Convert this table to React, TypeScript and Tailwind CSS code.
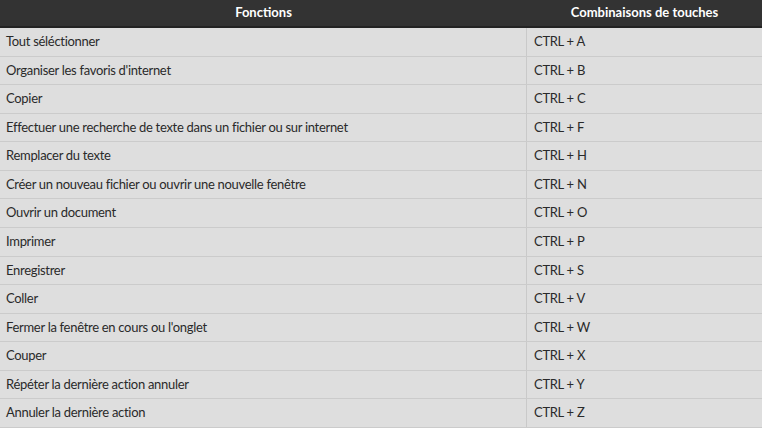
import React from 'react';

const shortcuts: [string, string][] = [
  ['Tout séléctionner', 'CTRL + A'],
  ["Organiser les favoris d'internet", 'CTRL + B'],
  ['Copier', 'CTRL + C'],
  ['Effectuer une recherche de texte dans un fichier ou sur internet', 'CTRL + F'],
  ['Remplacer du texte', 'CTRL + H'],
  ['Créer un nouveau fichier ou ouvrir une nouvelle fenêtre', 'CTRL + N'],
  ['Ouvrir un document', 'CTRL + O'],
  ['Imprimer', 'CTRL + P'],
  ['Enregistrer', 'CTRL + S'],
  ['Coller', 'CTRL + V'],
  ["Fermer la fenêtre en cours ou l'onglet", 'CTRL + W'],
  ['Couper', 'CTRL + X'],
  ['Répéter la dernière action annuler', 'CTRL + Y'],
  ['Annuler la dernière action', 'CTRL + Z'],
];

export default function App() {
  return (
    <div className="w-[762px] h-[428px] bg-white font-['Lato',sans-serif] text-[13px] text-[#2a2a2a]">
      {/* Header */}
      <div className="flex h-[28px] bg-[#333333] border-b-2 border-[#232323] text-white font-bold">
        <div className="w-[527px] flex items-center justify-center">Fonctions</div>
        <div className="flex-1 flex items-center justify-center">Combinaisons de touches</div>
      </div>

      {/* Rows */}
      {shortcuts.map(([label, keys]) => (
        <div key={keys} className="flex h-[28.57px] bg-[#dedede] border-b border-[#cbcbcb] tracking-[-0.3px]">
          <div className="w-[527px] flex items-center px-[6px] border-r border-[#c9c9c9]">{label}</div>
          <div className="flex-1 flex items-center px-[7px]">{keys}</div>
        </div>
      ))}
    </div>
  );
}
